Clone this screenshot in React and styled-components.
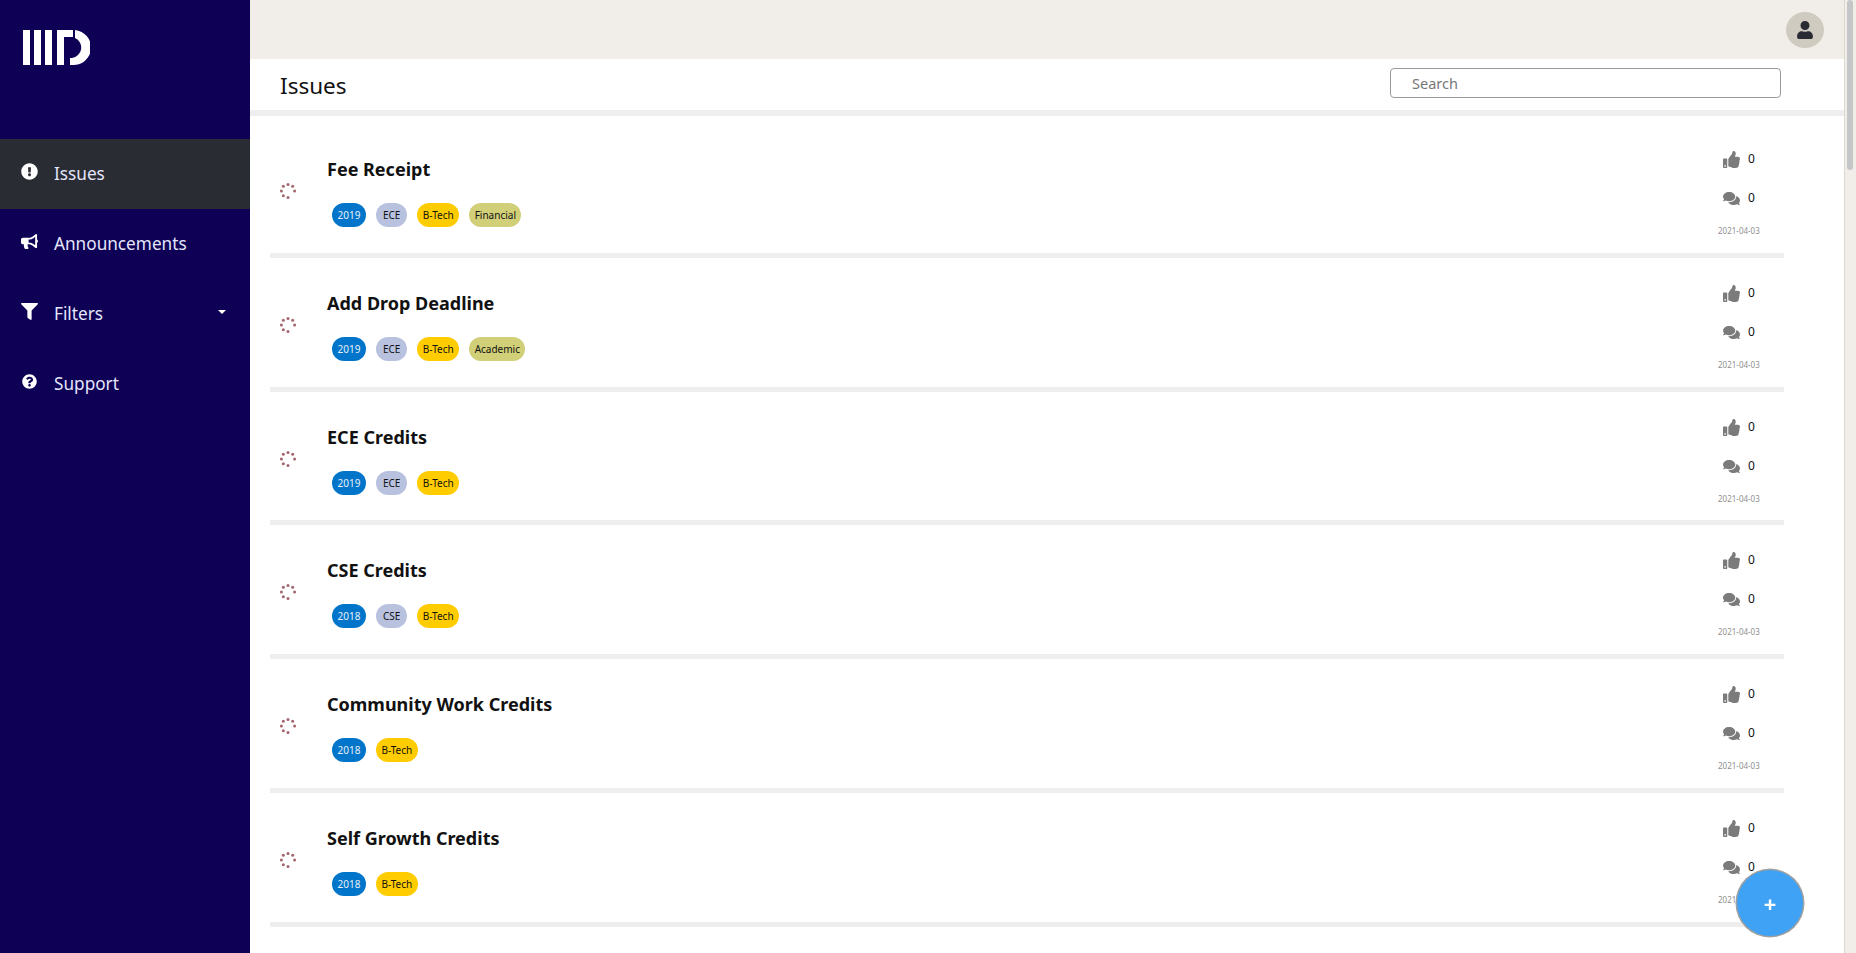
import React from 'react';
import styled, { createGlobalStyle } from 'styled-components';
import { FaExclamationCircle, FaBullhorn, FaFilter, FaQuestionCircle, FaUser, FaThumbsUp, FaComments } from 'react-icons/fa';

const Global = createGlobalStyle`
  html, body { margin: 0; padding: 0; height: 100%; overflow: hidden; }
  body { font-family: "Noto Sans", "Open Sans", sans-serif; background: #fff; }
  #root { height: 100%; }
`;
const Page = styled.div`display: flex; height: 953px; overflow: hidden;`;
const Sidebar = styled.aside`width: 250px; flex: none; background: #0e0055; color: #fff;`;
const LogoWrap = styled.div`height: 139px; padding: 30px 0 0 22px; box-sizing: border-box;`;
const NavItem = styled.div`
  height: 70px; display: flex; align-items: center; padding: 0 20px 1px; box-sizing: border-box;
  background: ${p => (p.$active ? '#2a2c33' : 'transparent')};
  color: #e4e6fb; font-size: 17.2px;
`;
const NavIcon = styled.span`
  width: 18px; margin-right: 16px; display: flex; justify-content: center; color: #fff;
  font-size: ${p => p.$size || 17}px; transform: translateY(-2px);
`;
const Caret = styled.span`
  margin-left: auto; margin-right: 4px; width: 0; height: 0;
  border-left: 4px solid transparent; border-right: 4px solid transparent; border-top: 4px solid #fff;
  transform: translateY(-2px);
`;
const Main = styled.main`flex: 1; min-width: 0; height: 953px; overflow: hidden;`;
const Rail = styled.div`
  width: 6px; flex: none; height: 953px; background: #f1eee9; border-left: 1px solid #ddd8d2; padding: 0 3px 0 2px;
`;
const Thumb = styled.div`height: 170px; background: #c4c6c8; border-radius: 3px;`;
const TopBar = styled.header`
  height: 59px; background: #f1eee9; display: flex; justify-content: flex-end; align-items: center; padding-right: 20px;
`;
const Avatar = styled.div`
  width: 38px; height: 36px; border-radius: 50%; background: #d0cbc1; color: #292c33;
  display: flex; align-items: center; justify-content: center; font-size: 18px;
`;
const TitleBar = styled.div`
  height: 51px; display: flex; align-items: center; justify-content: space-between;
  padding: 0 63px 0 30px; border-bottom: 6px solid #eeeeee;
`;
const Title = styled.h1`margin: 0; font-size: 22.5px; font-weight: 400; color: #111; line-height: 1; position: relative; top: 2px;`;
const Search = styled.input`
  width: 391px; height: 30px; box-sizing: border-box; border: 1px solid #999; border-radius: 4px;
  padding: 0 21px; font: 14.5px "Noto Sans", sans-serif; margin-top: -4px; outline: none;
  &::placeholder { color: #777; }
`;
const List = styled.div`padding: 8px 60px 0 20px;`;
const Row = styled.article`
  height: 133.8px; box-sizing: border-box; border-bottom: 5px solid #eeeeee; display: flex; align-items: stretch;
`;
const SpinnerCell = styled.div`width: 57px; flex: none; padding: 58px 0 0 9px; box-sizing: border-box;`;
const RowBody = styled.div`flex: 1; padding-top: 32px;`;
const RowTitle = styled.h2`margin: 0; font-size: 18px; font-weight: 700; color: #111; line-height: 26px;`;
const Tags = styled.div`display: flex; gap: 10px; margin: 21px 0 0 5px;`;
const Tag = styled.span`
  height: 24px; padding: 0 ${p => p.$px || 5.5}px; border-radius: 12px; display: flex; align-items: center; font-size: 10px;
  background: ${p => p.$bg}; color: ${p => p.$fg || '#111'};
`;
const Stats = styled.div`width: 60px; flex: none; margin-right: 6px; padding-top: 27px; display: flex; flex-direction: column;`;
const Stat = styled.div`
  height: 39px; display: flex; align-items: flex-start; gap: 8px; font-size: 12px; color: #111; padding-left: 5px;
  line-height: 15px;
  & svg { color: #7b7b7b; font-size: 17px; }
`;
const DateText = styled.div`font-size: 8px; color: #8f8f8f; line-height: 10px; margin-top: -3px; white-space: nowrap;`;
const Fab = styled.button`
  position: fixed; left: 1737px; top: 870px; width: 66px; height: 66px; border-radius: 50%; border: 0;
  background: #3fa2f5; color: #fff; font: 700 22px "Noto Sans", sans-serif; box-shadow: 0 0 0 1.5px #a0a0a0;
`;

const Spinner = () => (
  <svg width="18" height="18" viewBox="0 0 18 18">
    {[90, 135, 180, 225, 270, 315, 0].map(a => (
      <circle key={a} cx={9 + 6.6 * Math.cos((a * Math.PI) / 180)} cy={9 + 6.6 * Math.sin((a * Math.PI) / 180)} r="1.5" fill="#a3666e" />
    ))}
  </svg>
);
const Logo = () => (
  <svg width="68" height="36" viewBox="0 0 68 36" fill="#fff">
    <rect x="1" y="0" width="7" height="35" />
    <rect x="12" y="0" width="7" height="35" />
    <rect x="23" y="0" width="7" height="35" />
    <path d="M35 0 H51 V7 H42 V35 H35 Z" />
    <path d="M53 0 A17.5 17.5 0 0 1 50 35 H48 V28 H50 A10.5 10.5 0 0 0 53 8 Z" />
  </svg>
);

const BLUE = { bg: '#0075c9', fg: '#e8f0fa' };
const tag = { ece: '#b8c2df', yellow: '#ffcc00', khaki: '#d1cf78' };
const issues = [
  ['Fee Receipt', '2019', 'ECE', 'Financial'],
  ['Add Drop Deadline', '2019', 'ECE', 'Academic'],
  ['ECE Credits', '2019', 'ECE'],
  ['CSE Credits', '2018', 'CSE'],
  ['Community Work Credits', '2018'],
  ['Self Growth Credits', '2018'],
];

export default function App() {
  return (
    <Page>
      <Global />
      <Sidebar>
        <LogoWrap><Logo /></LogoWrap>
        <NavItem $active><NavIcon><FaExclamationCircle /></NavIcon>Issues</NavItem>
        <NavItem><NavIcon><FaBullhorn /></NavIcon>Announcements</NavItem>
        <NavItem><NavIcon><FaFilter /></NavIcon>Filters<Caret /></NavItem>
        <NavItem><NavIcon $size={15}><FaQuestionCircle /></NavIcon>Support</NavItem>
      </Sidebar>
      <Main>
        <TopBar><Avatar><FaUser /></Avatar></TopBar>
        <TitleBar><Title>Issues</Title><Search placeholder="Search" /></TitleBar>
        <List>
          {issues.map(([title, year, dept, cat]) => (
            <Row key={title}>
              <SpinnerCell><Spinner /></SpinnerCell>
              <RowBody>
                <RowTitle>{title}</RowTitle>
                <Tags>
                  <Tag $bg={BLUE.bg} $fg={BLUE.fg}>{year}</Tag>
                  {dept && <Tag $bg={tag.ece} $px={7}>{dept}</Tag>}
                  <Tag $bg={tag.yellow}>B-Tech</Tag>
                  {cat && <Tag $bg={tag.khaki}>{cat}</Tag>}
                </Tags>
              </RowBody>
              <Stats>
                <Stat><FaThumbsUp /><span>0</span></Stat>
                <Stat><FaComments /><span>0</span></Stat>
                <DateText>2021-04-03</DateText>
              </Stats>
            </Row>
          ))}
        </List>
      </Main>
      <Rail><Thumb /></Rail>
      <Fab>+</Fab>
    </Page>
  );
}
